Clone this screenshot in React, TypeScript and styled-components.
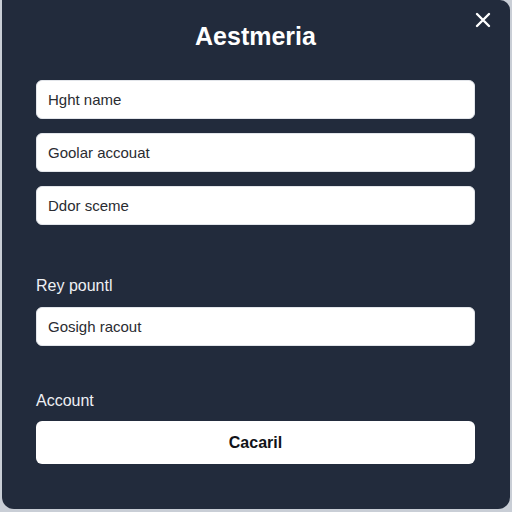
import React from 'react';
import styled, { createGlobalStyle } from 'styled-components';

const GlobalStyle = createGlobalStyle`
  html, body {
    margin: 0;
    padding: 0;
    background: #c9ced6;
  }
  * {
    box-sizing: border-box;
  }
`;

type Field = { label?: string; value: string };

const topFields: Field[] = [
  { value: 'Hght name' },
  { value: 'Goolar accouat' },
  { value: 'Ddor sceme' },
];

const App = () => {
  return (
    <>
      <GlobalStyle />
      <Panel>
        <CloseButton aria-label="close">
          <svg width="16" height="16" viewBox="0 0 16 16">
            <path d="M2 2 L14 14 M14 2 L2 14" stroke="#ffffff" strokeWidth="2.4" strokeLinecap="round" />
          </svg>
        </CloseButton>

        <Title>Aestmeria</Title>

        <FieldStack>
          {topFields.map((f) => (
            <Input key={f.value} defaultValue={f.value} />
          ))}
        </FieldStack>

        <Label $top={51}>Rey pountl</Label>
        <Input defaultValue="Gosigh racout" $top={11} />

        <Label $top={45}>Account</Label>
        <SubmitButton>Cacaril</SubmitButton>
      </Panel>
    </>
  );
};
export default App;

const Panel = styled.div`
  position: relative;
  width: 508px;
  height: 509px;
  margin: 0 2px 0 2px;
  background: #222b3c;
  border-radius: 0 10px 12px 12px;
  padding: 20px 35px 0 34px;
  display: flex;
  flex-direction: column;
  font-family: 'Liberation Sans', Arial, sans-serif;
`;

const CloseButton = styled.button`
  position: absolute;
  top: 11px;
  right: 18px;
  width: 18px;
  height: 18px;
  padding: 0;
  border: none;
  background: transparent;
  display: flex;
  align-items: center;
  justify-content: center;
`;

const Title = styled.h1`
  margin: 0;
  font-size: 25px;
  line-height: 32px;
  font-weight: 700;
  color: #ffffff;
  text-align: center;
`;

const FieldStack = styled.div`
  margin-top: 28px;
  display: flex;
  flex-direction: column;
  gap: 14px;
`;

const Input = styled.input<{ $top?: number }>`
  width: 100%;
  height: 39px;
  margin-top: ${(p) => p.$top ?? 0}px;
  padding: 0 11px;
  border: 1px solid #e2e5ea;
  border-radius: 6px;
  background: #ffffff;
  font-family: 'Liberation Sans', Arial, sans-serif;
  font-size: 15px;
  color: #2a2c31;
  outline: none;
`;

const Label = styled.div<{ $top: number }>`
  margin-top: ${(p) => p.$top}px;
  font-size: 16px;
  line-height: 20px;
  color: #eef0f4;
`;

const SubmitButton = styled.button`
  margin-top: 10px;
  width: 100%;
  height: 43px;
  border: none;
  border-radius: 6px;
  background: #ffffff;
  font-family: 'Liberation Sans', Arial, sans-serif;
  font-size: 16px;
  font-weight: 700;
  color: #111318;
`;
